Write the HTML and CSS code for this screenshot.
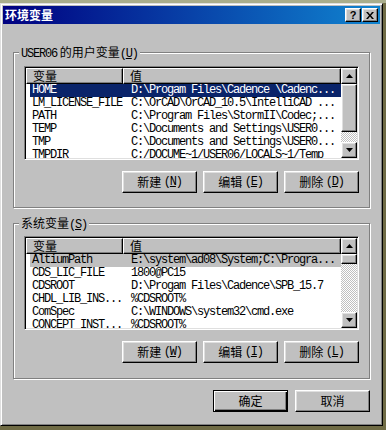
FILE: index.html
```html
<!DOCTYPE html>
<html lang="zh-CN">
<head>
    <meta charset="UTF-8">
    <title>环境变量</title>
    <link rel="stylesheet" href="styles.css">
</head>
<body>
    <div class="window">
        <div class="titlebar">
            <span class="title">环境变量</span>
            <div class="title-buttons">
                <div class="tbtn raised help">?</div>
                <div class="tbtn raised">
                    <svg width="8" height="7" viewBox="0 0 8 7"><path d="M0 0h2l2 2.5L6 0h2L5 3.5 8 7H6L4 4.5 2 7H0l3-3.5z" fill="#000"/></svg>
                </div>
            </div>
        </div>

        <div class="dialog-body">
            <div class="group">
                <div class="group-label"><span class="mono">USER06</span> 的用户变量<span class="key">(<u>U</u>)</span></div>
                <div class="list">
                    <div class="list-main">
                        <div class="list-head">
                            <div class="hcell first">变量</div>
                            <div class="hcell">值</div>
                        </div>
                        <div class="row sel"><span class="c1">HOME</span><span class="c2">D:\Progam Files\Cadence \Cadenc...</span></div>
                        <div class="row"><span class="c1">LM_LICENSE_FILE</span><span class="c2">C:\OrCAD\OrCAD_10.5\IntelliCAD ...</span></div>
                        <div class="row"><span class="c1">PATH</span><span class="c2">C:\Program Files\StormII\Codec;...</span></div>
                        <div class="row"><span class="c1">TEMP</span><span class="c2">C:\Documents and Settings\USER0...</span></div>
                        <div class="row"><span class="c1">TMP</span><span class="c2">C:\Documents and Settings\USER0...</span></div>
                        <div class="row"><span class="c1">TMPDIR</span><span class="c2">C:/DOCUME~1/USER06/LOCALS~1/Temp</span></div>
                    </div>
                    <div class="scrollbar">
                        <div class="sb-btn raised"><svg width="7" height="4" viewBox="0 0 7 4"><path d="M3.5 0L7 4H0z" fill="#000"/></svg></div>
                        <div class="sb-thumb raised big"></div>
                        <div class="sb-track"></div>
                        <div class="sb-btn raised"><svg width="7" height="4" viewBox="0 0 7 4"><path d="M0 0h7L3.5 4z" fill="#000"/></svg></div>
                    </div>
                </div>
                <div class="btn-row">
                    <div class="btn raised">新建 <span class="key">(<u>N</u>)</span></div>
                    <div class="btn raised">编辑 <span class="key">(<u>E</u>)</span></div>
                    <div class="btn raised">删除 <span class="key">(<u>D</u>)</span></div>
                </div>
            </div>

            <div class="group second">
                <div class="group-label">系统变量<span class="key">(<u>S</u>)</span></div>
                <div class="list">
                    <div class="list-main">
                        <div class="list-head">
                            <div class="hcell first">变量</div>
                            <div class="hcell">值</div>
                        </div>
                        <div class="row inactive"><span class="c1">AltiumPath</span><span class="c2">E:\system\ad08\System;C:\Progra...</span></div>
                        <div class="row"><span class="c1">CDS_LIC_FILE</span><span class="c2">1800@PC15</span></div>
                        <div class="row"><span class="c1">CDSROOT</span><span class="c2">D:\Progam Files\Cadence\SPB_15.7</span></div>
                        <div class="row"><span class="c1">CHDL_LIB_INS...</span><span class="c2">%CDSROOT%</span></div>
                        <div class="row"><span class="c1">ComSpec</span><span class="c2">C:\WINDOWS\system32\cmd.exe</span></div>
                        <div class="row"><span class="c1">CONCEPT_INST...</span><span class="c2">%CDSROOT%</span></div>
                    </div>
                    <div class="scrollbar">
                        <div class="sb-btn raised"><svg width="7" height="4" viewBox="0 0 7 4"><path d="M3.5 0L7 4H0z" fill="#000"/></svg></div>
                        <div class="sb-thumb raised small"></div>
                        <div class="sb-track"></div>
                        <div class="sb-btn raised"><svg width="7" height="4" viewBox="0 0 7 4"><path d="M0 0h7L3.5 4z" fill="#000"/></svg></div>
                    </div>
                </div>
                <div class="btn-row">
                    <div class="btn raised">新建 <span class="key">(<u>W</u>)</span></div>
                    <div class="btn raised">编辑 <span class="key">(<u>I</u>)</span></div>
                    <div class="btn raised">删除 <span class="key">(<u>L</u>)</span></div>
                </div>
            </div>

            <div class="footer">
                <div class="btn raised default">确定</div>
                <div class="btn raised">取消</div>
            </div>
        </div>
    </div>
</body>
</html>
```

FILE: styles.css
```css
body {
    margin: 0;
    padding-top: 3px;
    width: 386px;
    height: 430px;
    overflow: hidden;
    box-sizing: border-box;
    background: linear-gradient(#a9ad8c 0, #a9ad8c 3px, #6f6b45 3px);
    font-family: "Noto Sans CJK SC", sans-serif;
    font-size: 12px;
    color: #000;
}

.window {
    width: 383px;
    height: 423px;
    box-sizing: border-box;
    background: #c0c0c0;
    border: 1px solid;
    border-color: #dfdfdf #000 #000 #dfdfdf;
    box-shadow: inset 1px 1px #fff, inset -1px -1px #808080;
    padding: 2px;
}

.raised {
    background: #c0c0c0;
    box-sizing: border-box;
    border: 1px solid;
    border-color: #fff #000 #000 #fff;
    box-shadow: inset -1px -1px #808080, inset 1px 1px #dfdfdf;
}

/* title bar */
.titlebar {
    height: 18px;
    display: flex;
    align-items: center;
    padding: 0 2px 0 2px;
    background: linear-gradient(to right, #000080, #1084d0);
    color: #fff;
}

.title {
    font-size: 12px;
    font-weight: bold;
    line-height: 18px;
}

.title-buttons {
    margin-left: auto;
    display: flex;
    gap: 1px;
}

.tbtn {
    width: 16px;
    height: 14px;
    display: flex;
    align-items: center;
    justify-content: center;
}

.tbtn.help {
    font-family: "Liberation Sans", sans-serif;
    font-weight: bold;
    font-size: 11px;
    line-height: 12px;
    color: #000;
}

/* body */
.dialog-body {
    padding: 28px 10px 0 10px;
}

.group {
    position: relative;
    height: 156px;
    box-sizing: border-box;
    border: 1px solid #808080;
    box-shadow: inset 1px 1px #fff, 1px 1px #fff;
    padding: 13px 10px 0 10px;
}

.group.second {
    margin-top: 15px;
    padding-top: 12px;
}

.group-label {
    position: absolute;
    top: -8px;
    left: 5px;
    padding: 0 2px;
    height: 14px;
    line-height: 14px;
    background: #c0c0c0;
    white-space: pre;
}

.mono, .key {
    font-family: "Liberation Mono", monospace;
    font-size: 12px;
    letter-spacing: -1.2px;
}

.key u {
    text-underline-offset: 1px;
}

/* list view */
.list {
    height: 94px;
    box-sizing: border-box;
    display: flex;
    background: #fff;
    border: 1px solid;
    border-color: #808080 #fff #fff #808080;
    box-shadow: inset 1px 1px #000, inset -1px -1px #dfdfdf;
    padding: 1px;
}

.list-main {
    flex: 1;
    overflow: hidden;
}

.list-head {
    display: flex;
    height: 16px;
}

.hcell {
    flex: 1;
    height: 16px;
    line-height: 14px;
    padding-left: 6px;
    background: #c0c0c0;
    box-sizing: border-box;
    border: 1px solid;
    border-color: #fff #000 #000 #fff;
    box-shadow: inset -1px -1px #808080;
}

.hcell.first {
    flex: none;
    width: 97px;
}

.row {
    display: flex;
    height: 13px;
    line-height: 13px;
    margin-left: 4px;
    font-family: "Liberation Mono", monospace;
    font-size: 12px;
    letter-spacing: -1.2px;
    white-space: pre;
}

.row.sel {
    background: #0a246a;
    color: #fff;
}

.row.inactive {
    background: #c0c0c0;
}

.c1 {
    width: 93px;
    flex: none;
    padding-left: 2px;
    box-sizing: border-box;
    overflow: hidden;
}

.c2 {
    padding-left: 8px;
}

/* scroll bar */
.scrollbar {
    width: 16px;
    display: flex;
    flex-direction: column;
}

.sb-btn {
    height: 16px;
    flex: none;
    display: flex;
    align-items: center;
    justify-content: center;
}

.sb-thumb.big {
    height: 48px;
}

.sb-thumb.small {
    height: 10px;
}

.sb-track {
    flex: 1;
    background: repeating-conic-gradient(#c0c0c0 0 25%, #fff 0 50%) 0 0 / 2px 2px;
}

/* buttons */
.btn-row, .footer {
    display: flex;
    justify-content: flex-end;
    gap: 6px;
    margin-top: 11px;
}

.footer {
    gap: 7px;
}

.btn {
    width: 75px;
    height: 22px;
    display: flex;
    align-items: center;
    justify-content: center;
    line-height: 14px;
    white-space: pre;
}

.btn.default {
    border-color: #000;
    box-shadow: inset 1px 1px #fff, inset -1px -1px #000, inset -2px -2px #808080;
}
```
